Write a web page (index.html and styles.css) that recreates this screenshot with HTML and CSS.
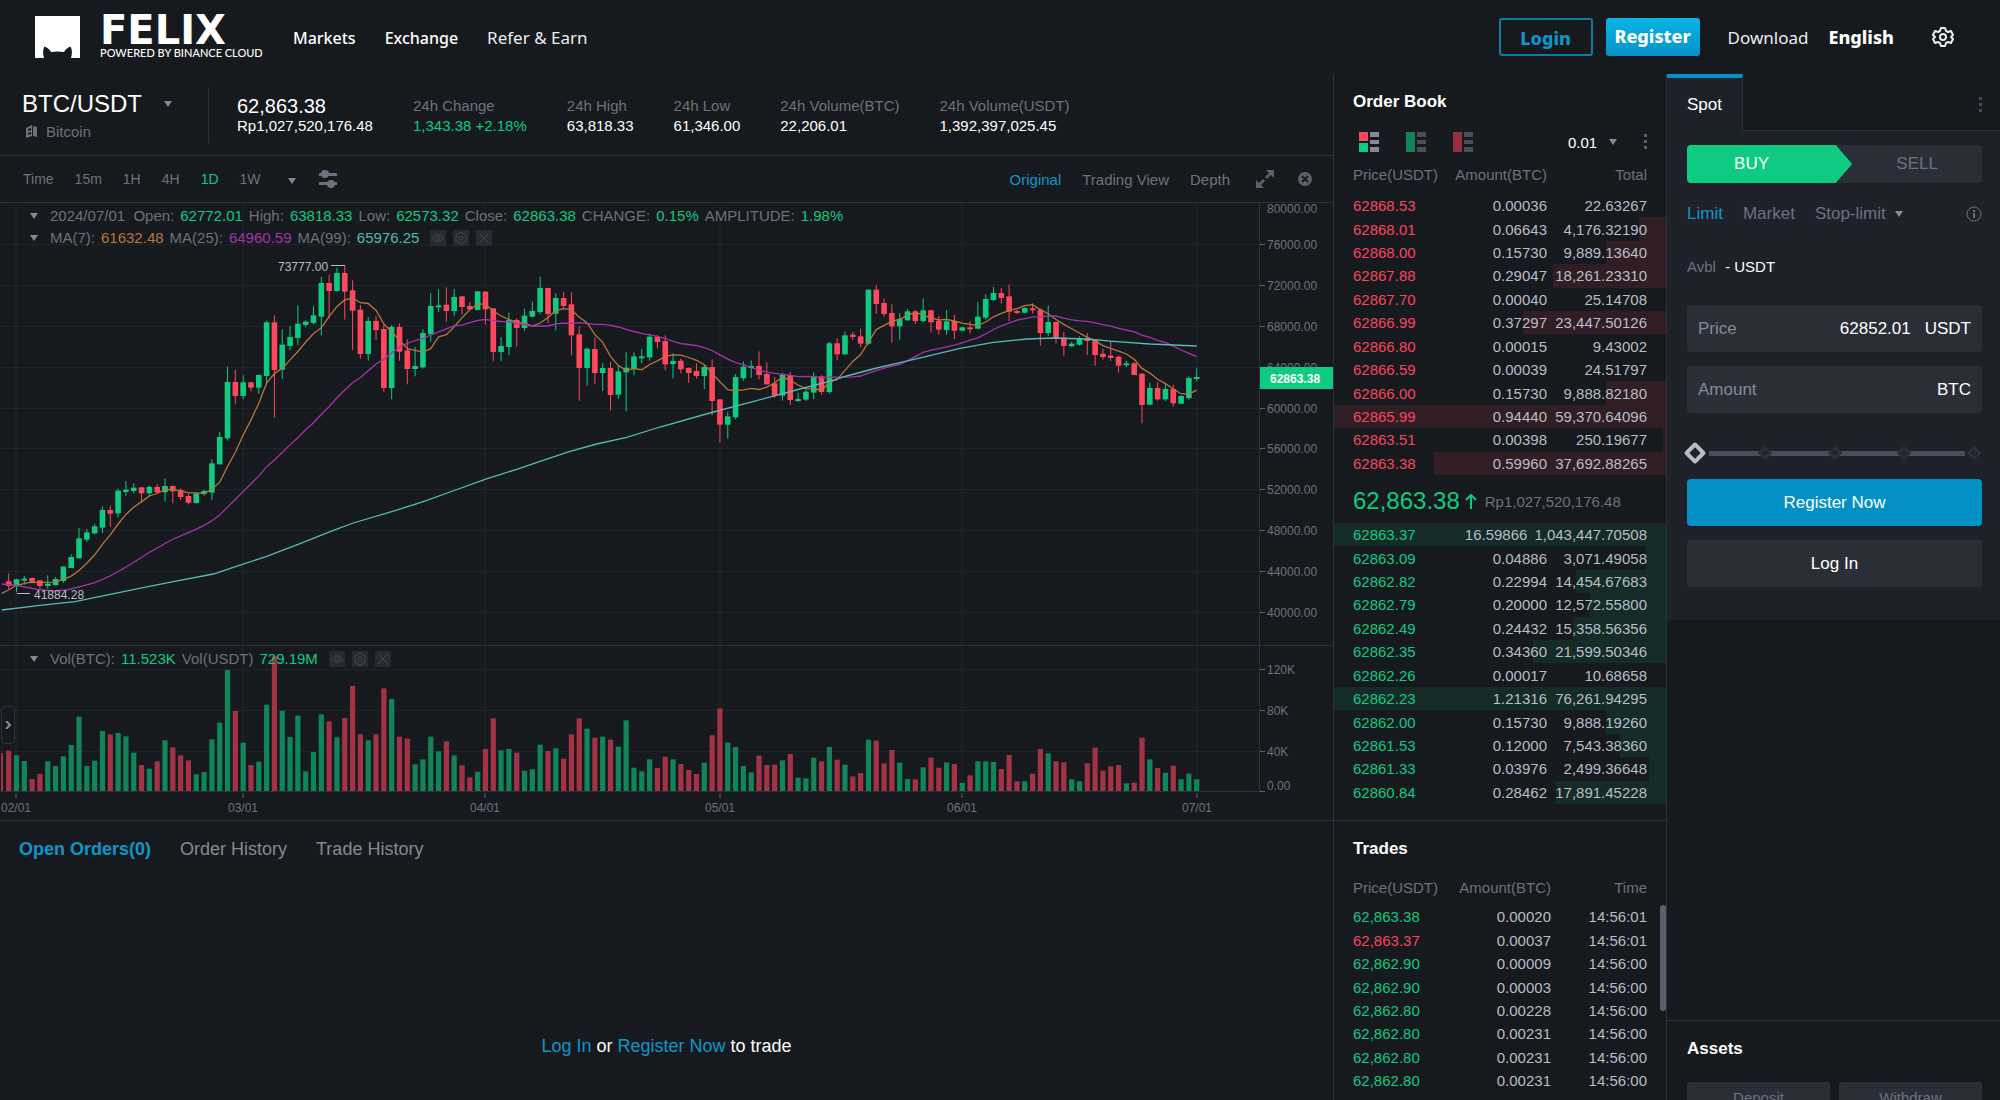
FILE: index.html
```html
<!DOCTYPE html>
<html lang="en">

<head>
    <meta charset="UTF-8">
    <meta name="viewport" content="width=device-width, initial-scale=1.0">
    <link rel="stylesheet" href="styles.css">
    <title>BTC/USDT | Felix</title>
</head>

<body>
    <header class="header">
        <a href="#" class="logo">
            <svg class="logo-mark" viewBox="0 0 45 42"><path d="M0 0H45V42H36Q38 35 35.500 30.500Q31 32 29 36Q22.500 35 16 36Q14 32 9.500 30.500Q7 35 9 42H0Z" fill="#fff"/></svg>
            <span class="logo-text">
                <span class="logo-name">FELIX</span>
                <span class="logo-sub">POWERED BY BINANCE CLOUD</span>
            </span>
        </a>
        <nav class="nav">
            <a href="#" class="medium">Markets</a>
            <a href="#" class="medium">Exchange</a>
            <a href="#">Refer &amp; Earn</a>
        </nav>
        <div class="account">
            <a href="#" class="btn-login">Login</a>
            <a href="#" class="btn-register">Register</a>
            <a href="#" class="download">Download</a>
            <a href="#" class="language">English</a>
            <button class="icon-btn" aria-label="Settings">
                <svg width="22" height="22" viewBox="0 0 22 22" fill="none" stroke="#eaecef" stroke-width="2" stroke-linejoin="round"><path d="M9 2h4l1 3 2 1 3-1 2 4-2 2 2 2-2 4-3-1-2 1-1 3H9l-1-3-2-1-3 1-2-4 2-2-2-2 2-4 3 1 2-1z"/><circle cx="11" cy="11" r="3"/></svg>
            </button>
        </div>
    </header>

    <main class="layout">
        <section class="left">
            <div class="ticker">
                <div class="pair">
                    <h1>BTC/USDT <span class="caret"></span></h1>
                    <a href="#" class="coin"><svg width="11" height="13" viewBox="0 0 11 13"><path d="M0 3L6 0V11L0 13ZM7 1L11 2V12L7 11Z" fill="#6c717e"/><path d="M2 4L5 3V5L2 6ZM2 8L5 7V9L2 10Z" fill="#161a1e"/></svg>Bitcoin</a>
                </div>
                <dl class="stats">
                    <div><dt class="last">62,863.38</dt><dd>Rp1,027,520,176.48</dd></div>
                    <div><dt>24h Change</dt><dd class="green">1,343.38 +2.18%</dd></div>
                    <div><dt>24h High</dt><dd>63,818.33</dd></div>
                    <div><dt>24h Low</dt><dd>61,346.00</dd></div>
                    <div><dt>24h Volume(BTC)</dt><dd>22,206.01</dd></div>
                    <div><dt>24h Volume(USDT)</dt><dd>1,392,397,025.45</dd></div>
                </dl>
            </div>

            <div class="toolbar">
                <div class="intervals">
                    <button>Time</button>
                    <button>15m</button>
                    <button>1H</button>
                    <button>4H</button>
                    <button class="active">1D</button>
                    <button>1W</button>
                    <button class="more" aria-label="More intervals"><span class="caret"></span></button>
                    <button aria-label="Indicators"><svg width="18" height="18" viewBox="0 0 18 18" fill="#6c717e"><path d="M0 3H18V6H0ZM0 12H18V15H0Z"/><circle cx="6" cy="4" r="4"/><circle cx="12" cy="14" r="4"/></svg></button>
                </div>
                <div class="views">
                    <button class="active">Original</button>
                    <button>Trading View</button>
                    <button>Depth</button>
                    <button class="expand" aria-label="Full screen"><svg width="18" height="18" viewBox="0 0 18 18" fill="#5b606b"><path d="M10 0H18V8L15 5L11 9L9 7L13 3ZM0 10L3 13L7 9L9 11L5 15L8 18H0Z"/></svg></button>
                    <button aria-label="Close chart"><svg width="14" height="14" viewBox="0 0 14 14"><circle cx="7" cy="7" r="7" fill="#5b606b"/><path d="M4 4L10 10M10 4L4 10" stroke="#161a1e" stroke-width="2"/></svg></button>
                </div>
            </div>

            <div class="chart">
                <svg id="chart" viewBox="0 0 1333 617"></svg>
                <div class="legend price-legend">
                    <p><span class="caret"></span>2024/07/01&nbsp; Open: <b class="green">62772.01</b> High: <b class="green">63818.33</b> Low: <b class="green">62573.32</b> Close: <b class="green">62863.38</b> CHANGE: <b class="green">0.15%</b> AMPLITUDE: <b class="green">1.98%</b></p>
                    <p><span class="caret"></span>MA(7): <b class="ma7">61632.48</b> MA(25): <b class="ma25">64960.59</b> MA(99): <b class="ma99">65976.25</b><span class="tools"></span></p>
                </div>
                <div class="legend volume-legend">
                    <p><span class="caret"></span>Vol(BTC): <b class="green">11.523K</b> Vol(USDT) <b class="green">729.19M</b><span class="tools"></span></p>
                </div>
                <button class="drawer" aria-label="Drawing tools"><svg width="6" height="8" viewBox="0 0 6 8"><path d="M1 0L5 4L1 8" fill="none" stroke="#848e9c" stroke-width="2"/></svg></button>
            </div>

            <div class="orders">
                <div class="order-tabs">
                    <button class="active">Open Orders(0)</button>
                    <button>Order History</button>
                    <button>Trade History</button>
                </div>
                <p class="login-hint"><a href="#">Log In</a> or <a href="#">Register Now</a> to trade</p>
            </div>
        </section>

        <section class="middle">
            <div class="book">
                <h2>Order Book</h2>
                <div class="book-tools">
                    <button aria-label="Bids and asks"><svg width="20" height="20" viewBox="0 0 20 20"><path d="M0 0H9V9H0Z" fill="#ff475d"/><path d="M0 11H9V20H0Z" fill="#0ecb81"/><path d="M11 0H20V5H11ZM11 8H20V12H11ZM11 15H20V20H11Z" fill="#848994"/></svg></button>
                    <button aria-label="Bids"><svg width="20" height="20" viewBox="0 0 20 20"><path d="M0 0H9V20H0Z" fill="#11845a"/><path d="M11 0H20V5H11ZM11 8H20V12H11ZM11 15H20V20H11Z" fill="#4a4e59"/></svg></button>
                    <button aria-label="Asks"><svg width="20" height="20" viewBox="0 0 20 20"><path d="M0 0H9V20H0Z" fill="#942f40"/><path d="M11 0H20V5H11ZM11 8H20V12H11ZM11 15H20V20H11Z" fill="#4a4e59"/></svg></button>
                    <label class="step"><select aria-label="Price step"><option>0.01</option></select><span class="caret"></span></label>
                    <button class="dots" aria-label="Order book options"><svg width="4" height="16" viewBox="0 0 4 16" fill="#5b606b"><path d="M0 0h3v3H0zM0 6h3v3H0zM0 12h3v3H0z"/></svg></button>
                </div>
                <table class="book-table">
                    <thead><tr><th>Price(USDT)</th><th>Amount(BTC)</th><th>Total</th></tr></thead>
                    <tbody class="asks" id="asks"></tbody>
                </table>
                <p class="last-price">62,863.38<svg width="12" height="15" viewBox="0 0 12 15"><path d="M6 15V1M1 6L6 1L11 6" fill="none" stroke="#0ecb81" stroke-width="2"/></svg><span>Rp1,027,520,176.48</span></p>
                <table class="book-table" aria-label="Bids">
                    <tbody class="bids" id="bids"></tbody>
                </table>
            </div>
            <div class="trades">
                <h2>Trades</h2>
                <table class="trades-table">
                    <thead><tr><th>Price(USDT)</th><th>Amount(BTC)</th><th>Time</th></tr></thead>
                    <tbody id="trades"></tbody>
                </table>
                <div class="scroll-thumb"></div>
            </div>
        </section>

        <aside class="right">
            <div class="spot-bar">
                <button class="spot">Spot</button>
                <button class="dots" aria-label="Order form options"><svg width="4" height="16" viewBox="0 0 4 16" fill="#4a4e59"><path d="M0 0h3v3H0zM0 6h3v3H0zM0 12h3v3H0z"/></svg></button>
            </div>
            <form class="order-form">
                <div class="side">
                    <button type="button" class="buy">BUY</button>
                    <button type="button" class="sell">SELL</button>
                </div>
                <div class="types">
                    <button type="button" class="active">Limit</button>
                    <button type="button">Market</button>
                    <button type="button">Stop-limit <span class="caret"></span></button>
                    <svg class="info" width="16" height="16" viewBox="0 0 16 16" fill="none" stroke="#6c717e"><circle cx="8" cy="8" r="7"/><path d="M8 7V12M8 4V6" stroke-width="2"/></svg>
                </div>
                <p class="avbl">Avbl <span>- USDT</span></p>
                <div class="field">
                    <label for="price">Price</label>
                    <input type="text" id="price" value="62852.01">
                    <span>USDT</span>
                </div>
                <div class="field">
                    <label for="amount">Amount</label>
                    <input type="text" id="amount">
                    <span>BTC</span>
                </div>
                <div class="slider">
                    <div class="stops"><i></i><i></i><i></i><i></i><i></i></div>
                    <input type="range" min="0" max="100" value="0" aria-label="Percent of balance">
                </div>
                <button type="button" class="btn-main">Register Now</button>
                <button type="button" class="btn-grey">Log In</button>
            </form>
            <div class="assets">
                <h2>Assets</h2>
                <div class="asset-btns">
                    <button>Deposit</button>
                    <button>Withdraw</button>
                </div>
            </div>
        </aside>
    </main>
    <script src="script.js"></script>
</body>

</html>
```
FILE: styles.css
```css
* {
    margin: 0;
    padding: 0;
    box-sizing: border-box;
}

body {
    background-color: #161a1e;
    color: #eaecef;
    font-family: "Liberation Sans", Arial, sans-serif;
    font-size: 15px;
    height: 100vh;
    display: flex;
    flex-direction: column;
    overflow: hidden;
}

a {
    color: inherit;
    text-decoration: none;
}

button,
input,
select {
    font: inherit;
    color: inherit;
    background: none;
    border: none;
    outline: none;
}

button {
    cursor: pointer;
}

svg {
    display: block;
}

h2 {
    font-size: 17px;
    line-height: 54px;
    padding-top: 1px;
    color: #fff;
}

.green {
    color: #0ecb81;
}

.caret {
    display: inline-block;
    border: 4px solid transparent;
    border-top: 6px solid #848994;
    border-bottom: none;
}

/* header */
.header {
    height: 74px;
    flex: none;
    display: flex;
    align-items: center;
    padding: 0 46px 0 35px;
    font-family: "Noto Sans", sans-serif;
    font-size: 17px;
}

.logo {
    display: flex;
    gap: 20px;
    margin-right: 36px;
}

.logo-mark {
    width: 45px;
    height: 42px;
}

.logo-text {
    display: flex;
    flex-direction: column;
    justify-content: space-between;
    width: 157px;
    height: 42px;
    color: #fff;
    white-space: nowrap;
}

.logo-name {
    font-family: "DejaVu Sans", sans-serif;
    font-weight: bold;
    font-size: 40px;
    line-height: 28px;
}

.logo-sub {
    font-family: Lato, sans-serif;
    font-weight: 500;
    font-size: 11px;
    line-height: 10px;
}

.nav {
    display: flex;
    align-items: baseline;
    gap: 29px;

    .medium {
        font-size: 16px;
        font-weight: 500;
        color: #fff;
    }
}

.account {
    margin-left: auto;
    display: flex;
    align-items: center;
}

.btn-login,
.btn-register {
    width: 94px;
    height: 38px;
    line-height: 36px;
    text-align: center;
    font-size: 18px;
    font-weight: 800;
    border-radius: 3px;
}

.btn-login {
    border: 2px solid #0b7f9c;
    color: #0f96c8;
    margin-right: 13px;
}

.btn-register {
    background: linear-gradient(#09b4e6, #0692c6);
    color: #fff;
    margin-right: 28px;
}

.download {
    margin-right: 20px;
}

.language {
    font-size: 18px;
    font-weight: 800;
    color: #fff;
    margin-right: 38px;
}

/* page columns */
.layout {
    flex: 1;
    min-height: 0;
    display: grid;
    grid-template-columns: 1fr 333px 333px;
}

.left {
    display: flex;
    flex-direction: column;
    border-right: 1px solid #2b3139;
    min-width: 0;
}

.ticker {
    height: 82px;
    flex: none;
    display: flex;
    align-items: center;
    border-bottom: 1px solid #2b3139;
    padding-left: 22px;
}

.pair {
    width: 187px;
    height: 56px;
    border-right: 1px solid #2b3139;

    h1 {
        font-size: 24px;
        font-weight: normal;
        line-height: 34px;
        color: #fff;
        display: flex;
        align-items: center;
        gap: 22px;
    }

    .coin {
        display: flex;
        align-items: center;
        gap: 9px;
        padding-left: 4px;
        line-height: 22px;
        color: #6c717e;
    }
}

.stats {
    display: flex;
    gap: 40px;
    padding: 2px 0 0 28px;

    dt {
        color: #6c717e;
        line-height: 20px;
    }

    dd {
        color: #fff;
        line-height: 20px;
    }

    .last {
        font-size: 20px;
        color: #fff;
    }

    .green {
        color: #0ecb81;
    }
}

.toolbar {
    height: 47px;
    flex: none;
    display: flex;
    justify-content: space-between;
    align-items: center;
    border-bottom: 1px solid #2b3139;
    padding: 0 21px 0 23px;
    color: #6c717e;
}

.intervals {
    display: flex;
    align-items: center;
    gap: 21px;
    font-size: 14px;

    .active {
        color: #0ecb81;
    }

    .more {
        padding: 0 2px 0 6px;
    }
}

.views {
    display: flex;
    align-items: center;
    gap: 21px;

    .active {
        color: #0f96c8;
    }

    .expand {
        padding: 0 3px 0 5px;
    }
}

/* chart */
.chart {
    position: relative;
    flex: none;
    border-bottom: 1px solid #2b3139;

    > svg {
        width: 100%;
        height: auto;
    }

    .axis {
        fill: #6c717e;
        font-size: 12px;
    }

    .mark {
        fill: #b7bdc6;
        font-size: 12px;
    }

    .flag {
        fill: #fff;
        font-size: 12px;
        font-weight: bold;
    }
}

.legend {
    position: absolute;
    left: 30px;
    color: #6c717e;
    line-height: 22px;

    p {
        display: flex;
        align-items: center;
        gap: 6px;
    }

    .caret {
        margin-right: 6px;
    }

    b {
        font-weight: normal;
    }
}

.price-legend {
    top: 2px;
}

.volume-legend {
    top: 445px;
}

.ma7 {
    color: #b5773a;
}

.ma25 {
    color: #a632ad;
}

.ma99 {
    color: #58b8b5;
}

.tools {
    display: flex;
    gap: 7px;
    padding-left: 5px;

    svg {
        background-color: #262b32;
    }
}

.drawer {
    position: absolute;
    left: 1px;
    top: 503px;
    width: 14px;
    height: 38px;
    border: 1px solid #2b3139;
    border-radius: 4px;
    background-color: #161a1e;
    display: flex;
    align-items: center;
    justify-content: center;
}

/* orders */
.orders {
    flex: 1;
    font-size: 18px;
    padding: 0 19px;
}

.order-tabs {
    display: flex;
    gap: 29px;
    line-height: 57px;
    color: #848994;

    .active {
        color: #0f96c8;
        font-weight: bold;
    }
}

.login-hint {
    text-align: center;
    padding-top: 158px;
    color: #fff;

    a {
        color: #0f96c8;
    }
}

/* order book and trades */
.middle {
    display: flex;
    flex-direction: column;
    min-height: 0;
    border-right: 1px solid #2b3139;

    h2 {
        padding-left: 19px;
    }
}

.book {
    flex: none;
    padding-bottom: 16px;
    border-bottom: 1px solid #2b3139;
}

.book-tools {
    height: 26px;
    display: flex;
    align-items: center;
    gap: 27px;
    padding: 0 18px 0 25px;
}

.step {
    margin-left: auto;
    display: flex;
    align-items: center;
    gap: 11px;

    select {
        appearance: none;
        color: #fff;
        width: 30px;
    }
}

table,
thead,
tbody {
    display: block;
}

tr {
    display: flex;
    align-items: center;
    padding: 0 19px;
}

th {
    font-weight: normal;
    color: #6c717e;
}

th,
td {
    text-align: right;
    white-space: nowrap;
}

th:first-child,
td:first-child {
    text-align: left;
    flex: 1;
}

th:last-child,
td:last-child {
    min-width: 100px;
    padding-left: 7px;
}

td {
    color: #b7bdc6;
}

.book-table {
    thead tr {
        height: 39px;
    }

    tbody {
        height: 281px;
        display: grid;
        grid-template-rows: repeat(12, 1fr);
    }
}

.asks {
    td:first-child {
        color: #f6465d;
    }

    tr {
        background: linear-gradient(to left, #311e25 var(--depth), transparent 0);
    }
}

.bids {
    td:first-child {
        color: #0ecb81;
    }

    tr {
        background: linear-gradient(to left, #152b28 var(--depth), transparent 0);
    }
}

.last-price {
    height: 48px;
    display: flex;
    align-items: center;
    padding: 4px 0 0 19px;
    font-size: 24px;
    color: #0ecb81;
    gap: 5px;

    span {
        font-size: 15px;
        color: #6c717e;
        padding-left: 3px;
    }
}

.trades {
    position: relative;
    flex: 1;
    min-height: 0;
    overflow: hidden;
}

.trades-table {
    thead tr {
        height: 22px;
        margin-bottom: 7px;
    }

    tbody {
        height: 211px;
        display: grid;
        grid-template-rows: repeat(9, 1fr);
    }

    td:first-child {
        color: #0ecb81;
    }

    .sell-trade td:first-child {
        color: #f6465d;
    }

    td:last-child,
    th:last-child {
        min-width: 96px;
    }
}

.scroll-thumb {
    position: absolute;
    right: 0;
    top: 84px;
    width: 6px;
    height: 106px;
    border-radius: 3px;
    background-color: #5a606c;
}

/* order form */
.right {
    display: flex;
    flex-direction: column;
    min-height: 0;
    overflow: hidden;
}

.spot-bar {
    height: 57px;
    flex: none;
    display: flex;
    justify-content: space-between;
    align-items: center;
    padding-right: 17px;
    box-shadow: inset 0 -1px #2b3139;

    .dots {
        padding-top: 4px;
    }
}

.spot {
    align-self: stretch;
    width: 76px;
    font-size: 17px;
    color: #fff;
    background-color: #1e2129;
    border-top: 4px solid #0692c6;
    border-right: 1px solid #2b3139;
}

.order-form {
    flex: none;
    background-color: #1e2129;
    padding: 14px 18px 33px 20px;
    font-size: 17px;
}

.side {
    height: 38px;
    display: flex;
    border-radius: 4px;
    overflow: hidden;
    background-color: #2a2f37;
    color: #6c717e;

    .buy {
        width: 56%;
        padding-right: 36px;
        background-color: #0ecb81;
        color: #fff;
        clip-path: polygon(0 0, 90% 0, 100% 50%, 90% 100%, 0 100%);
    }

    .sell {
        flex: 1;
    }
}

.types {
    height: 62px;
    display: flex;
    align-items: center;
    gap: 20px;
    color: #6c717e;

    .active {
        color: #0f96c8;
    }

    .caret {
        margin: 0 0 2px 5px;
    }

    .info {
        margin-left: auto;
    }
}

.avbl {
    font-size: 15px;
    line-height: 44px;
    padding-bottom: 16px;
    color: #6c717e;

    span {
        color: #fff;
        padding-left: 5px;
    }
}

.field {
    display: flex;
    align-items: center;
    gap: 14px;
    height: 47px;
    margin-bottom: 14px;
    padding: 0 11px;
    border-radius: 4px;
    background-color: #2a2f37;
    color: #fff;

    label {
        color: #848994;
    }

    input {
        flex: 1;
        min-width: 0;
        text-align: right;
    }
}

.slider {
    position: relative;
    height: 24px;
    margin: 28px 0 14px;

    input {
        position: absolute;
        inset: 0;
        width: 100%;
        appearance: none;
    }

    input::-webkit-slider-thumb {
        appearance: none;
        width: 16px;
        height: 16px;
        border: 4px solid #b7bdc6;
        border-radius: 2px;
        background-color: #1e2129;
        transform: rotate(45deg);
    }
}

.stops {
    height: 24px;
    display: flex;
    justify-content: space-between;
    align-items: center;
    padding: 0 3px;
    background: linear-gradient(#4a4e59, #4a4e59) 22px center / 256px 5px no-repeat;

    i {
        width: 10px;
        height: 10px;
        background-color: #22262e;
        border: 2px solid #2d323a;
        transform: rotate(45deg);
    }
}

.btn-main,
.btn-grey {
    display: block;
    width: 100%;
    height: 47px;
    border-radius: 4px;
    color: #fff;
}

.btn-main {
    background-color: #0390c4;
    margin-bottom: 14px;
}

.btn-grey {
    background-color: #2a2f37;
}

.assets {
    margin-top: auto;
    height: 80px;
    flex: none;
    overflow: hidden;
    border-top: 1px solid #2b3139;
    padding: 0 18px 0 20px;
}

.asset-btns {
    display: flex;
    gap: 9px;
    padding-top: 6px;

    button {
        flex: 1;
        height: 30px;
        border-radius: 3px;
        background-color: #2a2f37;
        color: #6c717e;
    }
}
```
FILE: script.js
```js
const UP = '#0ecb81';
const DOWN = '#ff475d';
const STEP = 7.816;
const X0 = 16.5;

// one day per entry: colour, high, body top, body bottom, low (thirds of a pixel down the pane)
const candles = `r 1000 1024 1038 1047|g 1016 1018 1038 1057|g 1008 1016 1022 1034|r 1012 1014 1026 1027|r 1020 1021 1038 1046
g 1006 1031 1038 1046|g 1012 1017 1035 1036|g 979 980 1023 1029|g 943 951 984 984|g 864 895 955 955|g 867 877 899 906
g 852 859 880 883|g 799 810 863 879|r 797 810 821 861|g 746 752 820 833|g 723 749 756 768|g 730 743 753 760
r 741 742 760 788|g 737 741 760 770|r 732 741 757 760|g 716 738 757 785|r 737 738 754 790|r 745 750 771 780
r 762 768 788 793|g 758 760 789 791|g 749 753 762 768|g 658 670 758 780|g 576 591 673 673|g 380 426 595 602
r 389 426 468 491|g 406 427 468 478|r 426 427 443 454|g 403 405 443 461|g 242 247 408 432|r 226 247 390 532
g 268 314 389 416|g 258 291 318 331|g 196 251 294 315|g 241 245 255 261|g 199 226 249 253|g 110 129 230 286
r 104 129 153 235|g 83 99 153 155|r 78 99 155 239|r 121 151 212 330|r 195 209 342 356|g 231 243 342 362
r 228 243 270 300|r 253 267 444 455|g 255 261 444 478|r 250 261 335 362|r 298 331 387 433|g 320 378 387 409
g 268 279 382 386|g 160 198 283 306|g 148 196 200 216|r 142 194 213 245|g 147 171 213 229|r 168 169 201 223
r 186 198 208 210|g 153 154 210 210|r 154 155 208 255|r 205 205 336 362|g 291 318 336 363|g 217 240 321 346
r 235 240 264 320|g 206 227 264 273|g 185 213 230 231|g 110 144 216 223|r 143 144 222 250|g 160 174 221 271
r 155 174 198 207|r 157 193 286 346|r 259 283 384 482|g 323 326 384 437|r 292 327 399 433|g 369 384 399 453
r 365 384 465 511|g 377 394 464 477|g 336 383 397 514|g 337 349 387 406|g 327 349 355 371|g 281 290 352 362
r 286 291 306 325|r 286 303 373 391|g 340 363 372 415|r 356 362 388 400|r 382 384 399 429|r 370 393 408 416
g 375 381 408 447|r 358 381 483 526|r 478 478 554 607|g 515 529 554 596|g 402 411 532 538|g 364 380 415 422
g 361 378 384 414|r 334 378 405 418|r 367 402 433 433|r 411 430 467 474|g 398 405 467 482|r 396 405 480 495
g 458 477 483 487|g 448 455 479 483|g 397 409 458 478|r 406 409 456 464|g 305 310 456 461|r 295 310 343 360
g 275 286 343 344|r 276 284 291 300|r 266 289 311 322|g 149 149 311 314|r 135 149 192 221|r 176 189 222 230
r 193 219 259 308|g 219 237 259 299|g 207 214 241 242|r 210 214 243 252|g 175 211 243 248|r 209 211 247 278
r 228 243 269 284|g 210 244 270 284|r 225 243 272 297|g 261 262 272 274|r 243 262 268 280|g 186 230 266 268
g 163 177 233 239|g 141 159 180 183|r 144 159 174 191|r 134 169 215 243|r 209 213 219 221|g 202 204 218 221
r 190 205 211 221|r 206 209 279 317|g 196 246 279 288|r 245 246 295 311|r 276 293 318 347|g 305 311 319 321
g 289 294 314 317|r 279 295 303 345|r 300 300 345 377|r 326 341 351 359|r 303 347 354 363|r 347 350 377 398
g 363 370 375 381|r 366 370 405 405|r 399 401 495 550|g 428 444 494 495|r 427 444 478 482|g 430 447 478 483
r 434 447 490 500|g 466 468 491 491|g 409 414 474 479|g 385 411 417 424`.split(/[|\n]/).map(row => {
    const [color, ...v] = row.split(' ');
    return { up: color === 'g', high: +v[0], top: +v[1], bottom: +v[2], low: +v[3] };
});

const volumes = [361, 375, 392, 446, 431, 393, 407, 378, 344, 259, 407, 391, 302, 312, 308, 318, 367, 404, 415, 393,
    330, 351, 375, 390, 432, 425, 327, 277, 119, 242, 337, 404, 394, 223, 78, 241, 320, 256, 423, 365, 252, 273, 321,
    263, 167, 312, 330, 312, 174, 206, 319, 325, 402, 387, 319, 363, 333, 375, 405, 441, 424, 356, 264, 360, 356, 367,
    421, 417, 343, 362, 354, 385, 312, 264, 295, 322, 319, 328, 349, 270, 412, 423, 387, 413, 379, 387, 401, 419, 431,
    397, 315, 234, 337, 350, 407, 426, 376, 404, 403, 390, 371, 442, 444, 382, 393, 350, 388, 403, 438, 428, 328, 331,
    399, 359, 397, 446, 447, 411, 382, 412, 396, 401, 457, 435, 393, 393, 395, 416, 374, 453, 453, 430, 356, 369, 393,
    396, 447, 453, 399, 352, 421, 408, 404, 459, 457, 322, 387, 413, 427, 406, 447, 430, 447];

// candles and volumes start one day before the first date label
const xOf = n => X0 + STEP * (n - 1);
const yOf = v => 37 + v / 3;

function average(size) {
    const points = [];
    for (let n = size - 1; n < candles.length; n++) {
        let sum = 0;
        for (let k = n - size + 1; k <= n; k++) {
            sum += candles[k].up ? candles[k].top : candles[k].bottom;
        }
        points.push([xOf(n) * 3, sum / size]);
    }
    return points;
}

function line(points, color) {
    const list = points.map(([x, y]) => `${(x / 3).toFixed(1)},${yOf(y).toFixed(1)}`).join(' ');
    return `<polyline points="${list}" fill="none" stroke="${color}" stroke-width="1.3"/>`;
}

function drawChart() {
    let svg = '';

    // grid and axes
    [['02/01', 16], ['03/01', 243], ['04/01', 485], ['05/01', 720], ['06/01', 962], ['07/01', 1197]].forEach(([text, x]) => {
        svg += `<path d="M${x} 0V589" stroke="#1f2429" stroke-width="1"/><path d="M${x} 590V595" stroke="#5b606b"/>`;
        svg += `<text class="axis" x="${x}" y="609" text-anchor="middle">${text}</text>`;
    });
    for (let i = 0; i < 11; i++) {
        const y = Math.round(i * 40.9);
        if (i > 0) svg += `<path d="M0 ${y}.5H1260" stroke="#1f2429"/><path d="M1260 ${y}.5H1265" stroke="#5b606b"/>`;
        svg += `<text class="axis" x="1267" y="${i ? y + 5 : 10}">${80000 - i * 4000}.00</text>`;
    }
    [['120K', 466], ['80K', 507], ['40K', 548]].forEach(([text, y]) => {
        svg += `<path d="M0 ${y}.5H1260" stroke="#1f2429"/><path d="M1260 ${y}.5H1265" stroke="#5b606b"/>`;
        svg += `<text class="axis" x="1267" y="${y + 5}">${text}</text>`;
    });
    svg += `<text class="axis" x="1267" y="587">0.00</text><path d="M1260 588.5H1265" stroke="#5b606b"/>`;
    svg += `<path d="M0 442.5H1333M1259.5 0V589M0 588.5H1260" stroke="#2b3139" fill="none"/>`;

    // volume
    svg += `<rect x="1" y="550" width="2" height="38" fill="#a33344"/>`;
    volumes.forEach((v, n) => {
        const h = (482 - v) / 3;
        svg += `<rect x="${xOf(n) - 2.6}" y="${588 - h}" width="5.2" height="${h}" fill="${candles[n].up ? '#11845a' : '#a33344'}"/>`;
    });

    // candles
    candles.forEach((c, n) => {
        const color = c.up ? UP : DOWN;
        svg += `<path d="M${xOf(n)} ${yOf(c.high)}V${yOf(c.low)}" stroke="${color}"/>`;
        svg += `<rect x="${xOf(n) - 2.8}" y="${yOf(c.top)}" width="5.6" height="${Math.max((c.bottom - c.top) / 3, 2)}" fill="${color}"/>`;
    });

    svg += line([[5, 1060], [26, 1050], [49, 1036], [85, 1028], [120, 1027], ...average(7)], '#b5773a');
    svg += line([[5, 1032], [60, 1038], [110, 1048], [160, 1053], [200, 1050], [240, 1040], [285, 1028], [330, 1008],
        [380, 980], [450, 936], [520, 897], [560, 880], ...average(25)], '#a632ad');
    svg += line([[5, 1110], [120, 1096], [225, 1085], [400, 1049], [520, 1025], [640, 1002], [700, 982], [800, 949],
        [900, 911], [1000, 871], [1060, 849], [1175, 815], [1270, 785], [1350, 756], [1455, 718], [1550, 688],
        [1620, 664], [1710, 634], [1790, 612], [1880, 592], [1980, 561], [2140, 516], [2250, 487], [2400, 447],
        [2470, 429], [2540, 408], [2630, 384], [2700, 368], [2780, 349], [2880, 325], [2980, 307], [3080, 297],
        [3160, 294], [3260, 297], [3340, 304], [3450, 312], [3590, 318]], '#58b8b5');

    // high and low marks, last price
    svg += `<text class="mark" x="278" y="68">73777.00</text><path d="M331 62.5H345M17 390.5H30" stroke="#b7bdc6"/>`;
    svg += `<text class="mark" x="34" y="396">41884.28</text>`;
    svg += `<rect x="1260" y="164" width="73" height="22" fill="${UP}"/><text class="flag" x="1270" y="180">62863.38</text>`;
    document.getElementById('chart').innerHTML = svg;
}

const asks = [
    ['62868.53', '0.00036', '22.63267', 0],
    ['62868.01', '0.06643', '4,176.32190', 8],
    ['62868.00', '0.15730', '9,889.13640', 18],
    ['62867.88', '0.29047', '18,261.23310', 34],
    ['62867.70', '0.00040', '25.14708', 0],
    ['62866.99', '0.37297', '23,447.50126', 43],
    ['62866.80', '0.00015', '9.43002', 0],
    ['62866.59', '0.00039', '24.51797', 0],
    ['62866.00', '0.15730', '9,888.82180', 18],
    ['62865.99', '0.94440', '59,370.64096', 100],
    ['62863.51', '0.00398', '250.19677', 1],
    ['62863.38', '0.59960', '37,692.88265', 70],
];

const bids = [
    ['62863.37', '16.59866', '1,043,447.70508', 100],
    ['62863.09', '0.04886', '3,071.49058', 6],
    ['62862.82', '0.22994', '14,454.67683', 27],
    ['62862.79', '0.20000', '12,572.55800', 23],
    ['62862.49', '0.24432', '15,358.56356', 28],
    ['62862.35', '0.34360', '21,599.50346', 40],
    ['62862.26', '0.00017', '10.68658', 0],
    ['62862.23', '1.21316', '76,261.94295', 100],
    ['62862.00', '0.15730', '9,888.19260', 18],
    ['62861.53', '0.12000', '7,543.38360', 14],
    ['62861.33', '0.03976', '2,499.36648', 5],
    ['62860.84', '0.28462', '17,891.45228', 33],
];

const trades = [
    ['62,863.38', '0.00020', '14:56:01'],
    ['62,863.37', '0.00037', '14:56:01', true],
    ['62,862.90', '0.00009', '14:56:00'],
    ['62,862.90', '0.00003', '14:56:00'],
    ['62,862.80', '0.00228', '14:56:00'],
    ['62,862.80', '0.00231', '14:56:00'],
    ['62,862.80', '0.00231', '14:56:00'],
    ['62,862.80', '0.00231', '14:56:00'],
    ['62,862.80', '0.00231', '14:56:00'],
];

function bookRow([price, amount, total, depth]) {
    return `<tr style="--depth: ${depth}%"><td>${price}</td><td>${amount}</td><td>${total}</td></tr>`;
}

document.getElementById('asks').innerHTML = asks.map(bookRow).join('');
document.getElementById('bids').innerHTML = bids.map(bookRow).join('');
document.getElementById('trades').innerHTML = trades.map(([price, amount, time, sell]) =>
    `<tr class="${sell ? 'sell-trade' : ''}"><td>${price}</td><td>${amount}</td><td>${time}</td></tr>`).join('');

// eye, gear and close buttons after each indicator
document.querySelectorAll('.tools').forEach(el => {
    el.innerHTML = ['<path d="M2 8Q8 1 14 8Q8 15 2 8Z"/><circle cx="8" cy="8" r="2"/>',
        '<path d="M8 2L13 5V11L8 14L3 11V5Z"/><circle cx="8" cy="8" r="2"/>',
        '<path d="M3 3L13 13M13 3L3 13"/>'].map(icon =>
        `<svg width="16" height="16" viewBox="0 0 16 16" fill="none" stroke="#40454e">${icon}</svg>`).join('');
});

drawChart();
```
